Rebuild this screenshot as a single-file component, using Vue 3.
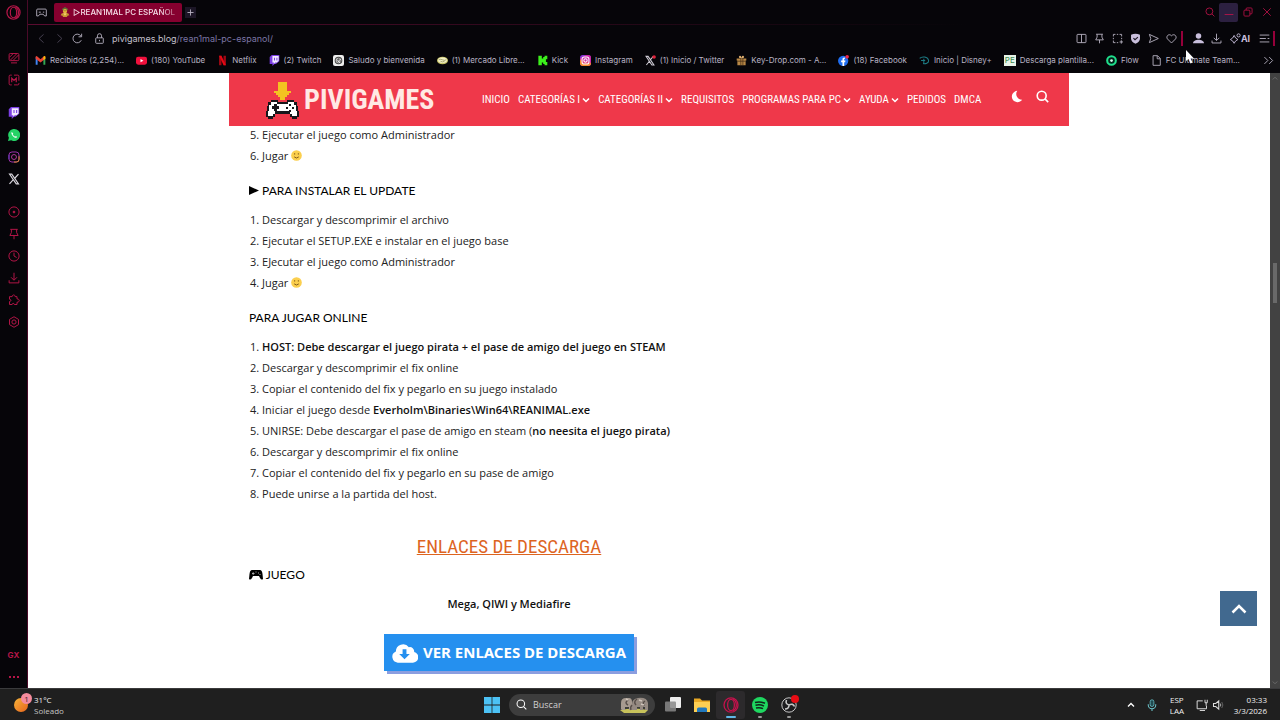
<script setup>
import { ref } from 'vue'

const search = ref('')

// svg bodies, all on a 16x16 grid
const icons = {
  opera: '<ellipse cx="8" cy="8" rx="7" ry="7.2"/><ellipse cx="8" cy="8" rx="3.4" ry="5.6"/><path d="M10 2.4c2 .8 3.300 3 3.300 5.600s-1.300 4.800-3.300 5.600"/>',
  gxcard: '<rect x="1.500" y="2" width="13" height="9.500" rx="1.500"/><path d="M2 7l5-5M3 11l9-9M7 11l7-7M4 14.500h8"/>',
  mbox: '<path d="M5 1.500H3A1.500 1.500 0 0 0 1.500 3v10A1.500 1.500 0 0 0 3 14.500h2M8 1.500h5A1.500 1.500 0 0 1 14.500 3v6M14.500 12v1a1.500 1.500 0 0 1-1.500 1.500H8"/><path d="M5 11V5.500l3 3 3-3V11" stroke-width="1.600"/>',
  player: '<circle cx="8" cy="8" r="6.800"/><circle cx="8" cy="8" r="1.200" fill="currentColor"/>',
  pin: '<path d="M3 1.800h10M4.500 2v4L2.500 10h11l-2-4V2M8 10v5"/>',
  clock: '<circle cx="8" cy="8" r="6.800"/><path d="M8 3.500V8l3.500 2"/>',
  download: '<path d="M8 1v9.500M4 7l4 4 4-4M1.500 11v3.500h13V11"/>',
  puzzle: '<path d="M2 3.500h3.500c0-3 4-3 4 0H12V6.500c4 0 4 4.500 0 4.500v3H8.500c0-2-3-2-3 0H2v-4c2.500 0 2.500-3 0-3z"/>',
  gear: '<path d="M8 1l6 3.500v7L8 15l-6-3.500v-7z"/><circle cx="8" cy="8" r="2.800"/>',
  twitch: '<path d="M4 0h11v9l-5 4H8l-3 3v-3H1V3z" fill="#7b3fe4" stroke="none"/><path d="M5 1.500h9v7l-2.500 2.500H9L7 13v-2H5z" fill="#f3ecff" stroke="none"/><path d="M8 4v4M11.500 4v4" stroke="#7b3fe4" stroke-width="1.500"/>',
  whatsapp: '<path d="M0 16l1.200-4.200A8 8 0 1 1 4.300 15z" fill="#25d366" stroke="none"/><path d="M5 4c-1.500 1.500.5 4.500 2 6s4.200 2.700 5.300.8L10.500 9.300l-1 1C8 9.600 7 8.500 6.200 7l.9-1z" fill="#fff" stroke="none"/>',
  igline: '<rect x="1.300" y="1.300" width="13.400" height="13.400" rx="4" stroke="#a033b0"/><path d="M8 14.700h3.500a3.200 3.200 0 0 0 3.200-3.200V7" stroke="#e09030"/><circle cx="8" cy="8" r="3.300" stroke="#b13a9a"/><path d="M1.300 5v6" stroke="#6a3ac8"/>',
  x: '<path d="M2 1.500h3l9 13h-3z" stroke="#d8d5dc" stroke-width="1.500"/><path d="M14 1.500L9 7M6.800 9.200L2 14.500" stroke="#d8d5dc" stroke-width="1.600"/>',
  gmail: '<path d="M1 14V3l2.800 2v9z" fill="#4285f4"/><path d="M15 14V3l-2.800 2v9z" fill="#34a853"/><path d="M1 3c0-2 1.500-1.500 2.800-.500L8 6l4.200-3.500C13.500 1.500 15 1 15 3v2.500L8 11 1 5.500z" fill="#ea4335"/><path d="M12.200 2.500C13.500 1.500 15 1 15 3v2.500l-2.800 2.200z" fill="#fbbc04"/>',
  youtube: '<rect x="0" y="2.500" width="16" height="11.500" rx="3" fill="#f0103c"/><path d="M6.500 5.700v5l4.300-2.500z" fill="#fff"/>',
  netflix: '<path d="M3 1h3.500v14H3zM9.500 1H13v14H9.500z" fill="#a00814"/><path d="M3 1h3.500L13 15H9.500z" fill="#e50914"/>',
  chatgpt: '<rect width="16" height="16" rx="3" fill="#eee"/><circle cx="8" cy="8" r="4.800" fill="none" stroke="#444" stroke-width="1.500"/><path d="M5 5.500l6 2v4M11 5l-5 1.500v5M5 8.500l4 3M8 4v4l3 2" fill="none" stroke="#555"/>',
  mercado: '<ellipse cx="8" cy="8" rx="8" ry="5.600" fill="#c8c46a"/><ellipse cx="8" cy="7.500" rx="6.500" ry="4" fill="#f4f1c8"/><path d="M2.500 7q3-1.500 5.500 0t5.500 0M5 9q3 2 6 0" fill="none" stroke="#8c8a50"/>',
  kick: '<path d="M2 1h5v4h2V3h2V1h4v5h-2v4h2v5h-4v-2H9v-2H7v4H2z" fill="#3cf01c"/>',
  instagram: '<rect width="16" height="16" rx="4" fill="#8b35d6"/><path d="M0 6l16 5v1a4 4 0 0 1-4 4H4a4 4 0 0 1-4-4z" fill="#f98b2c"/><path d="M0 5l9-5h3a4 4 0 0 1 4 4v8L4 13z" fill="#e0249a" opacity=".75"/><rect x="3" y="3" width="10" height="10" rx="3" fill="none" stroke="#fff" stroke-width="1.500"/><circle cx="8" cy="8" r="2.400" fill="none" stroke="#fff" stroke-width="1.500"/>',
  xbadge: '<path d="M1.500 2h3l8.500 12.500h-3zM12 2L8 6.800M6 9.500L2 14.500" fill="none" stroke="#d0cdd6" stroke-width="1.500"/><circle cx="13.200" cy="2.800" r="2.600" fill="#e0243c"/>',
  keydrop: '<path d="M1 5h14v3h-1v7H2V8H1z" fill="#b88846"/><path d="M8 5C5 5 3 3 5 1.500S8 3 8 5zm0 0c3 0 5-2 3-3.500S8 3 8 5z" fill="#e0b070"/><path d="M2 9h12M7 5v10M10 5v10" stroke="#3a2512"/>',
  facebook: '<circle cx="7.500" cy="8.500" r="7.500" fill="#1f6df0"/><path d="M6.500 16v-5.500h-2V8h2V6.500c0-2 1-3 3.500-2.700v2C8.800 5.700 9 6 9 8h1.800l-.4 2.500H9V16z" fill="#fff"/><circle cx="13.300" cy="2.700" r="2.600" fill="#f02849"/>',
  disney: '<path d="M1 5c3-3.500 12-3 13 3 .5 4-5 5.500-8 4.500M3 8h6M7 5.500v8" fill="none" stroke="#1d7b84" stroke-width="1.500"/>',
  flow: '<circle cx="8" cy="8" r="6.300" fill="#03231b" stroke="#1fe08c" stroke-width="3"/><circle cx="8" cy="8" r="2" fill="#d8fff0"/>',
  file: '<path d="M3 1h6.500L13.500 5v10H3zM9 1v4.500h4.500" fill="none" stroke="#aaa6b4" stroke-width="1.400"/>',
  split: '<rect x="1.500" y="2" width="13" height="12" rx="1"/><path d="M8 2v12"/>',
  capture: '<path d="M2 5V2h3M7 2h2M11 2h3v3M14 7v2M2 7v2M2 11v3h3M7 14h2M11 13h5M13.500 10.500v5"/>',
  shield: '<path d="M1.500 2.500Q8-.5 14.500 2.500V8q0 5-6.500 7.500Q1.500 13 1.500 8z" fill="#c9bfdc" stroke="none"/><path d="M5 7.500l2.300 2.300L11.500 6" stroke="#17121f" stroke-width="1.600"/>',
  send: '<path d="M2 2l13 6-13 6 2-6z"/>',
  heart: '<path d="M8 14.500L2 8.500C-.5 5 4 0 8 4c4-4 8.500 1 6 4.500z"/>',
  user: '<circle cx="8" cy="4.500" r="4" fill="#c9bfdc" stroke="none"/><path d="M0 15c0-7 16-7 16 0z" fill="#c9bfdc" stroke="none"/>',
  menu: '<path d="M1 3h14M1 8h9M12.500 8H15M1 13h14"/>',
  spark: '<path d="M6 3.500Q7.500 8 11.500 9.500 7.500 11 6 15 4.500 11 .5 9.500 4.500 8 6 3.500z"/><circle cx="12.500" cy="3.500" r="2.300"/>',
  magnifier: '<circle cx="7" cy="7" r="5.500"/><path d="M11 11l4 4"/>',
  restore: '<rect x="1.500" y="5" width="9.500" height="9.500" rx="1.500"/><path d="M5 5V3a1.500 1.500 0 0 1 1.500-1.500H13A1.500 1.500 0 0 1 14.500 3v6.500A1.500 1.500 0 0 1 13 11h-2"/>',
  close: '<path d="M2 2l12 12M14 2L2 14"/>',
  minimize: '<path d="M1 12h14"/>',
  gamepad: '<path d="M2.500 3h11A1.500 1.500 0 0 1 15 4.500v8.500h-2.500l-2-2.500h-5l-2 2.500H1V4.500A1.500 1.500 0 0 1 2.500 3zM4 7.500h3M10 7.500h2"/>',
  lock: '<rect x="2.500" y="7" width="11" height="8" rx="1"/><path d="M5 7V4a3 3 0 0 1 6 0v3M8 10v2"/>',
  back: '<path d="M11 2L4.500 8l6.500 6"/>',
  forward: '<path d="M5 2l6.500 6L5 14"/>',
  reload: '<path d="M13.500 10.500a6.300 6.300 0 1 1-.5-6M14 1v4.500H9.500"/>',
  plus: '<path d="M8 1v14M1 8h14"/>',
  more: '<path d="M2 3l5 5-5 5M9 3l5 5-5 5"/>',
}

const sideGroups = [
  [{ icon: 'gxcard', name: 'GX Control' }, { icon: 'mbox', name: 'Mods' }],
  [
    { icon: 'twitch', name: 'Twitch' },
    { icon: 'whatsapp', name: 'WhatsApp' },
    { icon: 'igline', name: 'Instagram' },
    { icon: 'x', name: 'X' },
  ],
  [
    { icon: 'player', name: 'Player' },
    { icon: 'pin', name: 'Pinboards' },
    { icon: 'clock', name: 'Historial' },
    { icon: 'download', name: 'Descargas' },
    { icon: 'puzzle', name: 'Extensiones' },
    { icon: 'gear', name: 'Configuración' },
  ],
]

const pageTools = [
  { icon: 'split', name: 'Pantalla dividida' },
  { icon: 'pin', name: 'Fijar' },
  { icon: 'capture', name: 'Captura' },
  { icon: 'shield', name: 'Bloqueador' },
  { icon: 'send', name: 'Enviar' },
  { icon: 'heart', name: 'Favorito' },
]

const bookmarks = [
  { icon: 'gmail', text: 'Recibidos (2,254)...' },
  { icon: 'youtube', text: '(180) YouTube' },
  { icon: 'netflix', text: 'Netflix' },
  { icon: 'twitch', text: '(2) Twitch' },
  { icon: 'chatgpt', text: 'Saludo y bienvenida' },
  { icon: 'mercado', text: '(1) Mercado Libre...' },
  { icon: 'kick', text: 'Kick' },
  { icon: 'instagram', text: 'Instagram' },
  { icon: 'xbadge', text: '(1) Inicio / Twitter' },
  { icon: 'keydrop', text: 'Key-Drop.com - A...' },
  { icon: 'facebook', text: '(18) Facebook' },
  { icon: 'disney', text: 'Inicio | Disney+' },
  { icon: 'pe', text: 'Descarga plantilla...' },
  { icon: 'flow', text: 'Flow' },
  { icon: 'file', text: 'FC Ultimate Team...' },
]

const nav = [
  { text: 'INICIO' },
  { text: 'CATEGORÍAS I', sub: true },
  { text: 'CATEGORÍAS II', sub: true },
  { text: 'REQUISITOS' },
  { text: 'PROGRAMAS PARA PC', sub: true },
  { text: 'AYUDA', sub: true },
  { text: 'PEDIDOS' },
  { text: 'DMCA' },
]
</script>

<template>
  <div class="desktop">
    <div class="browser">
      <aside class="sidebar">
        <button class="side-btn logo" aria-label="Opera GX">
          <svg class="line" viewBox="0 0 16 16" v-html="icons.opera" />
        </button>
        <div v-for="(group, i) in sideGroups" :key="i" class="side-group">
          <button v-for="item in group" :key="item.name" class="side-btn" :aria-label="item.name">
            <svg class="line" viewBox="0 0 16 16" v-html="icons[item.icon]" />
          </button>
        </div>
        <div class="side-group bottom">
          <button class="side-btn gx">GX</button>
          <button class="side-btn dots" aria-label="Más"><i /><i /><i /></button>
        </div>
      </aside>

      <div class="window">
        <div class="tabs">
          <button class="tool corner" aria-label="GX Corner">
            <svg class="line" viewBox="0 0 16 16" v-html="icons.gamepad" />
          </button>
          <button class="tab">
            <svg class="tab-icon" viewBox="0 0 16 16">
              <path d="M8 0l5 3-1 2H4L3 3z" fill="#5d6b35" />
              <circle cx="8" cy="6.500" r="3.500" fill="#e8b93c" />
              <path d="M3 10h10l2 3-3 1-1 2H5l-1-2-3-1z" fill="#c89632" />
              <path d="M6 6h1M9 6h1" stroke="#30240c" stroke-width="1.500" />
              <path d="M5 10l3 4 3-4z" fill="#f4d36a" />
            </svg>
            <span>▷REAN1MAL PC ESPAÑOL</span>
          </button>
          <button class="new-tab" aria-label="Nueva pestaña">
            <svg class="line" viewBox="0 0 16 16" v-html="icons.plus" />
          </button>
          <div class="controls">
            <button aria-label="Buscar pestañas"><svg class="line" viewBox="0 0 16 16" v-html="icons.magnifier" /></button>
            <button class="hover" aria-label="Minimizar"><svg class="line" viewBox="0 0 16 16" v-html="icons.minimize" /></button>
            <button aria-label="Restaurar"><svg class="line" viewBox="0 0 16 16" v-html="icons.restore" /></button>
            <button aria-label="Cerrar"><svg class="line" viewBox="0 0 16 16" v-html="icons.close" /></button>
          </div>
        </div>

        <div class="toolbar">
          <button class="tool dim" aria-label="Atrás"><svg class="line" viewBox="0 0 16 16" v-html="icons.back" /></button>
          <button class="tool dim" aria-label="Adelante"><svg class="line" viewBox="0 0 16 16" v-html="icons.forward" /></button>
          <button class="tool" aria-label="Recargar"><svg class="line" viewBox="0 0 16 16" v-html="icons.reload" /></button>
          <button class="tool lock" aria-label="Seguridad"><svg class="line" viewBox="0 0 16 16" v-html="icons.lock" /></button>
          <a class="address" href="#">pivigames.blog<span>/rean1mal-pc-espanol/</span></a>
          <button v-for="t in pageTools" :key="t.name" class="tool" :aria-label="t.name">
            <svg class="line" viewBox="0 0 16 16" v-html="icons[t.icon]" />
          </button>
          <i class="bar first" />
          <button class="tool" aria-label="Perfil"><svg class="line" viewBox="0 0 16 16" v-html="icons.user" /></button>
          <button class="tool" aria-label="Descargas"><svg class="line" viewBox="0 0 16 16" v-html="icons.download" /></button>
          <button class="tool ai"><svg class="line" viewBox="0 0 16 16" v-html="icons.spark" />AI</button>
          <button class="tool" aria-label="Menú"><svg class="line" viewBox="0 0 16 16" v-html="icons.menu" /></button>
          <i class="bar" />
        </div>

        <div class="bookmarks">
          <a v-for="b in bookmarks" :key="b.text" href="#">
            <span v-if="b.icon === 'pe'" class="pe">PE</span>
            <svg v-else viewBox="0 0 16 16" v-html="icons[b.icon]" />
            {{ b.text }}
          </a>
          <button class="tool overflow" aria-label="Más marcadores">
            <svg class="line" viewBox="0 0 16 16" v-html="icons.more" />
          </button>
        </div>

        <div class="viewport">
          <div class="page">
            <header class="site-header">
              <a class="brand" href="#">
                <svg viewBox="0 0 33 38">
                  <path d="M12 1h9v9h4v2h-2v2h-2v2h-2v3h-5v-3h-2v-2h-2v-2H8v-2h4z" fill="#f3c321" />
                  <path d="M5 19h7v2h9v-2h7v2h3v4h1v5h1v6h-2v2h-5v-2h-2v-3H9v3H7v2H2v-2H0v-6h1v-5h1v-4h3z" fill="#17171b" />
                  <path d="M5 21h6v2h11v-2h6v3h2v6h1v5h-5v-2h-2v-3H9v3H7v2H2v-5h1v-6h2z" fill="#fff" />
                  <path d="M8 23h3v2h2v3h-2v2H8v-2H6v-3h2zM23 23h2v2h-2zM20 26h2v2h-2zM26 26h2v2h-2zM23 29h2v2h-2z" fill="#17171b" />
                </svg>
                PIVIGAMES
              </a>
              <nav>
                <a v-for="n in nav" :key="n.text" href="#">
                  {{ n.text }}
                  <svg v-if="n.sub" viewBox="0 0 8 8"><path d="M1 2.500l3 3 3-3" fill="none" stroke="currentColor" stroke-width="1.500" /></svg>
                </a>
              </nav>
              <div class="actions">
                <button aria-label="Modo oscuro">
                  <svg viewBox="0 0 16 16"><path d="M9 1a7 7 0 1 0 6 11A7 7 0 0 1 9 1z" fill="currentColor" /></svg>
                </button>
                <button aria-label="Buscar">
                  <svg class="find" viewBox="0 0 16 16" v-html="icons.magnifier" />
                </button>
              </div>
            </header>

            <article>
              <ol class="cut" start="5">
                <li>Ejecutar el juego como Administrador</li>
                <li>
                  Jugar
                  <svg class="smile" viewBox="0 0 12 12"><circle cx="6" cy="6" r="5.800" fill="#fbcf4e" /><path d="M4 3.500v1.500M8 3.500v1.500M3.500 7.500q2.500 2.500 5 0" fill="none" stroke="#7a5218" /></svg>
                </li>
              </ol>

              <h3>
                <svg class="play" viewBox="0 0 10 10"><path d="M0 1l10 4.500L0 10z" fill="currentColor" /></svg>
                PARA INSTALAR EL UPDATE
              </h3>
              <ol>
                <li>Descargar y descomprimir el archivo</li>
                <li>Ejecutar el SETUP.EXE e instalar en el juego base</li>
                <li>EJecutar el juego como Administrador</li>
                <li>
                  Jugar
                  <svg class="smile" viewBox="0 0 12 12"><circle cx="6" cy="6" r="5.800" fill="#fbcf4e" /><path d="M4 3.500v1.500M8 3.500v1.500M3.500 7.500q2.500 2.500 5 0" fill="none" stroke="#7a5218" /></svg>
                </li>
              </ol>

              <h3>PARA JUGAR ONLINE</h3>
              <ol>
                <li><strong>HOST: Debe descargar el juego pirata + el pase de amigo del juego en STEAM</strong></li>
                <li>Descargar y descomprimir el fix online</li>
                <li>Copiar el contenido del fix y pegarlo en su juego instalado</li>
                <li>Iniciar el juego desde <strong>Everholm\Binaries\Win64\REANIMAL.exe</strong></li>
                <li>UNIRSE: Debe descargar el pase de amigo en steam (<strong>no neesita el juego pirata)</strong></li>
                <li>Descargar y descomprimir el fix online</li>
                <li>Copiar el contenido del fix y pegarlo en su pase de amigo</li>
                <li>Puede unirse a la partida del host.</li>
              </ol>

              <h2>ENLACES DE DESCARGA</h2>
              <h3 class="game">
                <svg class="pad" viewBox="0 0 14 11">
                  <path d="M3 1h8q2 0 2.500 4l.5 5q-1.500 1.500-3-1L10 7H4L3 9q-1.500 2.500-3 1l.5-5Q1 1 3 1z" fill="currentColor" />
                  <path d="M3 4.500h2.500M4.200 3.300v2.500M9 4h1M10.500 5.500h1M6.500 3h1" stroke="#aaa" />
                </svg>
                JUEGO
              </h3>
              <p>Mega, QIWI y Mediafire</p>
              <a class="download" href="#">
                <svg viewBox="0 0 27 20">
                  <path d="M6 20a6 6 0 0 1-2-11.500A7.500 7.500 0 0 1 17.500 4a4.500 4.500 0 0 1 5.500 5 5.600 5.600 0 0 1-2 11z" fill="#fff" />
                  <path d="M11 6h4v5h3.500L13 16.500 7.500 11H11z" fill="#2590ef" />
                </svg>
                VER ENLACES DE DESCARGA
              </a>
            </article>
          </div>
          <button class="to-top" aria-label="Volver arriba">
            <svg viewBox="0 0 16 10"><path d="M1.500 8.500L8 2l6.500 6.500" fill="none" stroke="#fff" stroke-width="2.500" /></svg>
          </button>
          <div class="scrollbar">
            <svg viewBox="0 0 8 6"><path d="M1 5l3-3 3 3" fill="none" stroke="#777" /></svg>
            <i />
            <svg class="down" viewBox="0 0 8 6"><path d="M1 1l3 3 3-3" fill="none" stroke="#777" /></svg>
          </div>
        </div>
      </div>
    </div>

    <footer class="taskbar">
      <div class="weather">
        <span class="sun"><b>1</b></span>
        <div>31°C<br><span class="muted">Soleado</span></div>
      </div>

      <div class="apps">
        <button class="app" aria-label="Inicio">
          <svg viewBox="0 0 16 16"><path d="M0 0h7.600v7.600H0zM8.400 0H16v7.600H8.400zM0 8.400h7.600V16H0zM8.400 8.400H16V16H8.400z" fill="#4cc2f5" /></svg>
        </button>
        <label class="search">
          <svg viewBox="0 0 16 16" v-html="icons.magnifier" />
          <input v-model="search" type="text" placeholder="Buscar" aria-label="Buscar">
          <svg class="elephants" viewBox="0 0 30 17">
            <path d="M0 14q14-3 28 0l-3 3H4z" fill="#c7c25b" />
            <path d="M1 13V7q0-5 5-5h3q3 0 3 4v8H9v-3H5v3H2z" fill="#a69a90" />
            <path d="M12 14V8q0-5 6-6 9-1 10 5v7h-3v-3h-2v3h-3v-3h-3v3z" fill="#958a82" />
            <path d="M8 4q-4 3 0 5M17 3q-4 3-1 6M25 5q-3 2-1 5M12 9q-2 2-1 5" fill="none" stroke="#584f4a" />
            <path d="M6 3l2 1M19 4l3 1M21 8l3 1" stroke="#d0c5bc" />
          </svg>
        </label>
        <button class="app" aria-label="Vista de tareas">
          <svg viewBox="0 0 16 16"><rect x="5" y="0" width="11" height="11" rx="1" fill="#eee" /><rect x="0" y="4.500" width="11" height="10" rx="1" fill="#888" opacity=".85" /></svg>
        </button>
        <button class="app" aria-label="Explorador">
          <svg viewBox="0 0 16 16"><path d="M0 1.500h6l2 2h8V15H0z" fill="#e9a925" /><path d="M0 5h16v10H0z" fill="#fdcf53" /><path d="M3 15v-3q0-1.500 1.500-1.500h7Q13 10.500 13 12v3z" fill="#2279bd" /></svg>
        </button>
        <button class="app active" aria-label="Opera GX">
          <svg class="line" viewBox="0 0 16 16" v-html="icons.opera" />
        </button>
        <button class="app open" aria-label="Spotify">
          <svg viewBox="0 0 16 16"><circle cx="8" cy="8" r="8" fill="#1ed760" /><path d="M3 5.500q5-1.500 10 .8M3.500 8.300q4.500-1.200 8.500.8M4 11q4-1 7 .7" fill="none" stroke="#10251a" stroke-width="1.500" /></svg>
        </button>
        <button class="app open" aria-label="OBS Studio">
          <svg viewBox="0 0 16 16"><circle cx="8" cy="8" r="7.200" fill="#1d1d1f" stroke="#c7c7c7" /><path d="M8 8q-4-1-2.500-5M8 8q4-2 5.500 1.500M8 8q0 4-4 4" fill="none" stroke="#c7c7c7" stroke-width="1.600" /></svg>
          <i class="rec" />
        </button>
      </div>

      <div class="tray">
        <svg viewBox="0 0 16 16"><path d="M4 10l4-4 4 4" fill="none" stroke="#fff" stroke-width="1.800" /></svg>
        <svg viewBox="0 0 16 16"><rect x="5.500" y="1" width="5" height="9" rx="2.500" fill="#204a50" stroke="#6cc5cc" /><path d="M3 7v1a5 5 0 0 0 10 0V7M8 13v3" fill="none" stroke="#6cc5cc" stroke-width="1.400" /></svg>
        <div class="lang">ESP<br>LAA</div>
        <svg viewBox="0 0 16 16"><path d="M9 2.500H1.500V13H14V9M5 15.300h7M12 1v4h3V1M13.500 5v4" fill="none" stroke="#ddd" stroke-width="1.300" /></svg>
        <svg viewBox="0 0 16 16"><path d="M2 6h3l4-3.500v11L5 10H2z" fill="none" stroke="#ddd" stroke-width="1.400" /><path d="M11 6q1.500 2 0 4" fill="none" stroke="#ddd" /><path d="M13 4q3 4 0 8" fill="none" stroke="#777" /></svg>
        <div class="time">03:33<br>3/3/2026</div>
      </div>
    </footer>

    <svg class="cursor" viewBox="0 0 9 14"><path d="M1 0v11l2.500-2 2 4.500 2-1-2-4H9z" fill="#fff" /></svg>
  </div>
</template>

<style>
body {
  margin: 0;
  background: #fff;
}
</style>

<style scoped>
.desktop {
  position: relative;
  display: flex;
  flex-direction: column;
  min-height: 100vh;
  font-family: Inter, sans-serif;
  color: #b9b4c4;
}

button {
  padding: 0;
  border: 0;
  background: none;
  color: inherit;
  font: inherit;
}

a {
  color: inherit;
  text-decoration: none;
}

svg { flex: none; }

.line {
  display: block;
  width: 12px;
  height: 12px;
  fill: none;
  stroke: currentColor;
  stroke-width: 1.3;
}

.browser {
  flex: 1;
  display: flex;
  background: #060509;
}

/* sidebar */
.sidebar {
  display: flex;
  flex-direction: column;
  gap: 11px;
  width: 27px;
  border-right: 1px solid #4a0a28;
  color: #b51648;
}

.side-group {
  display: flex;
  flex-direction: column;
}

.side-group.bottom { margin-top: auto; }

.side-btn {
  display: flex;
  align-items: center;
  justify-content: center;
  height: 22px;
}

.side-btn.logo {
  height: 25px;
  margin-bottom: 11px;
}

.side-btn.logo .line {
  width: 15px;
  height: 15px;
}

.gx {
  font-size: 8px;
  font-weight: 700;
}

.dots { gap: 2px; }

.dots i {
  width: 2px;
  height: 2px;
  background: #b51648;
}

/* window */
.window {
  flex: 1;
  min-width: 0;
  display: flex;
  flex-direction: column;
}

.tabs {
  display: flex;
  align-items: center;
  height: 24px;
  padding: 0 4px 0 7px;
  border-bottom: 1px solid;
  border-image: linear-gradient(90deg, #5a0c30, #060509 75%) 1;
}

.tool {
  display: flex;
  align-items: center;
  justify-content: center;
  width: 18px;
  height: 18px;
}

.tool .line {
  width: 11px;
  height: 11px;
}

.corner {
  width: 12px;
  margin-right: 7px;
}

.tab {
  display: flex;
  align-items: center;
  gap: 3px;
  width: 128px;
  height: 19px;
  padding: 0 4px 0 6px;
  border-radius: 2px;
  background: #86002f;
  color: #f6dfe8;
  font-size: 8px;
  font-weight: 500;
}

.tab span {
  white-space: nowrap;
  mask-image: linear-gradient(90deg, #000 85%, #0006);
}

.tab-icon {
  width: 10px;
  height: 10px;
}

.new-tab {
  display: flex;
  align-items: center;
  justify-content: center;
  width: 11px;
  height: 11px;
  margin-left: 3px;
  background: #1c1626;
}

.new-tab .line {
  width: 7px;
  height: 7px;
  stroke-width: 2;
}

.controls {
  display: flex;
  margin-left: auto;
  color: #c0124a;
}

.controls button {
  display: flex;
  align-items: center;
  justify-content: center;
  width: 19px;
  height: 19px;
}

.controls .line {
  width: 10px;
  height: 10px;
}

.controls .hover {
  border-radius: 2px;
  background: #2c2040;
}

.toolbar {
  display: flex;
  align-items: center;
  height: 26px;
  padding: 0 5px 0 4px;
}

.dim { color: #4c4656; }

.lock { margin: 0 4px; }

.address {
  flex: 1;
  color: #c4c0cc;
  font-size: 9px;
}

.address span { color: #7c76a6; }

.bar {
  width: 2px;
  height: 15px;
  background: #96003a;
}

.bar.first { margin: 0 6px 0 1px; }

.ai {
  width: 30px;
  color: #c9bfdc;
  font-size: 9px;
  font-weight: 700;
}

.bookmarks {
  display: flex;
  align-items: center;
  gap: 12px;
  height: 18px;
  padding: 0 5px 4px 7px;
  font-size: 8px;
}

.bookmarks a {
  display: flex;
  align-items: center;
  gap: 4px;
  white-space: nowrap;
}

.bookmarks a svg {
  width: 11px;
  height: 11px;
}

.pe {
  padding: 0 1px;
  background: #e8f4e8;
  color: #3a8a50;
  font-size: 8px;
  line-height: 11px;
}

.overflow {
  width: 14px;
  margin-left: auto;
}

/* page */
.viewport {
  position: relative;
  flex: 1;
  display: flex;
  background: #fff;
}

.page {
  flex: 1;
  min-width: 0;
}

.site-header {
  position: relative;
  z-index: 1;
  box-sizing: border-box;
  display: flex;
  align-items: center;
  max-width: 840px;
  height: 53px;
  margin: 0 auto;
  padding: 0 20px 0 37px;
  background: #ef384a;
  color: #fff;
}

.brand {
  flex: none;
  display: flex;
  align-items: center;
  gap: 5px;
  width: 216px;
  color: #ffe9e4;
  font: 700 28px/38px "Roboto Condensed", Roboto, sans-serif;
}

.brand svg {
  width: 33px;
  height: 38px;
}

nav {
  flex: 1;
  display: flex;
  gap: 8px;
  font: 11px/16px "Roboto Condensed", Roboto, sans-serif;
}

nav a {
  display: flex;
  align-items: center;
  gap: 2px;
  white-space: nowrap;
}

nav svg {
  width: 8px;
  height: 8px;
}

.actions {
  display: flex;
  gap: 13px;
  padding-bottom: 6px;
}

.actions button { display: flex; }

.actions svg {
  width: 13px;
  height: 13px;
}

.find {
  fill: none;
  stroke: #fff;
  stroke-width: 2;
}

article {
  display: flex;
  flex-direction: column;
  box-sizing: border-box;
  max-width: 840px;
  margin: 0 auto;
  padding: 0 300px 17px 20px;
  color: #222;
  font: 11px/21px "Open Sans", sans-serif;
}

ol {
  margin: 0;
  padding: 0 0 0 1px;
  list-style-position: inside;
}

.cut { margin-top: -2px; }

strong {
  color: #111;
  font-weight: 600;
}

.smile {
  width: 11px;
  height: 11px;
  vertical-align: -1px;
}

h3 {
  margin: 14px 0 8px;
  color: #000;
  font: 12px/21px Lato, sans-serif;
}

.play {
  width: 10px;
  height: 10px;
}

h2 {
  align-self: center;
  margin: 28px 0 2px;
  color: #dd641f;
  font: 19px/30px "Roboto Condensed", Roboto, sans-serif;
  text-decoration: underline;
}

.game { margin-top: 0; }

.pad {
  width: 14px;
  height: 11px;
  vertical-align: -1px;
}

p {
  margin: 0;
  color: #111;
  font-weight: 600;
  text-align: center;
}

.download {
  display: flex;
  align-items: center;
  align-self: center;
  gap: 5px;
  height: 37px;
  margin-top: 20px;
  padding: 0 8px;
  background: #2590ef;
  box-shadow: 3px 3px #8b9ee0;
  color: #fff;
  font: 700 15px/21px "Noto Sans", sans-serif;
  white-space: nowrap;
}

.download svg {
  width: 26px;
  height: 20px;
}

.to-top {
  position: absolute;
  right: 23px;
  bottom: 62px;
  display: flex;
  align-items: center;
  justify-content: center;
  width: 37px;
  height: 35px;
  background: #41698f;
}

.to-top svg {
  width: 16px;
  height: 10px;
}

.scrollbar {
  display: flex;
  flex-direction: column;
  align-items: center;
  width: 10px;
  background: #424242;
}

.scrollbar svg {
  width: 6px;
  height: 6px;
  margin: 2px 0;
}

.scrollbar i {
  width: 4px;
  height: 40px;
  margin-top: 180px;
  background: #696969;
}

.scrollbar .down { margin-top: auto; }

/* taskbar */
.taskbar {
  display: grid;
  grid-template-columns: 1fr auto 1fr;
  align-items: center;
  box-sizing: border-box;
  height: 32px;
  border-top: 1px solid #3a3a3c;
  background: #1f1f1f;
  color: #f0f0f0;
  font: 8px/11px "Open Sans", sans-serif;
}

.weather {
  display: flex;
  align-items: center;
  gap: 6px;
  padding-left: 14px;
}

.muted { color: #c4c4c4; }

.sun {
  position: relative;
  width: 14px;
  height: 14px;
  border-radius: 50%;
  background: linear-gradient(135deg, #f6b43a, #e8641c);
}

.sun b {
  position: absolute;
  top: -5px;
  right: -4px;
  width: 11px;
  border-radius: 50%;
  background: #f58b9c;
  color: #40202a;
  font-weight: 400;
  text-align: center;
}

.apps {
  display: flex;
  align-items: center;
}

.app {
  position: relative;
  display: flex;
  align-items: center;
  justify-content: center;
  width: 29px;
  height: 28px;
}

.app svg {
  width: 16px;
  height: 16px;
}

.app.active {
  border-radius: 3px;
  background: #2c2a2c;
  color: #c4124c;
}

.app.open::after,
.app.active::after {
  content: '';
  position: absolute;
  bottom: 1px;
  width: 4px;
  height: 2px;
  border-radius: 1px;
  background: #999;
}

.app.active::after {
  width: 10px;
  background: #60b8e8;
}

.rec {
  position: absolute;
  top: 4px;
  right: 4px;
  width: 8px;
  height: 8px;
  border-radius: 50%;
  background: #e80c14;
}

.search {
  display: flex;
  align-items: center;
  gap: 6px;
  box-sizing: border-box;
  width: 146px;
  height: 22px;
  margin: 0 3px;
  padding: 0 5px 0 7px;
  border-radius: 11px;
  background: #3d3d3d;
}

.search svg {
  width: 11px;
  height: 11px;
  fill: none;
  stroke: #fff;
  stroke-width: 1.5;
}

.search svg.elephants {
  width: 30px;
  height: 17px;
  stroke: none;
}

.search input {
  flex: 1;
  min-width: 0;
  padding: 0;
  border: 0;
  outline: 0;
  background: none;
  color: #fff;
  font: 9px/12px "Open Sans", sans-serif;
}

.search input::placeholder {
  color: #d0d0d0;
  opacity: 1;
}

.tray {
  display: flex;
  align-items: center;
  justify-content: flex-end;
  padding-right: 13px;
}

.tray svg {
  width: 12px;
  height: 12px;
  margin-right: 4px;
}

.tray svg:first-child { margin-right: 9px; }

.lang {
  margin: 0 12px 0 8px;
  text-align: center;
}

.time {
  width: 39px;
  text-align: right;
}

.cursor {
  position: absolute;
  top: 50px;
  right: 86px;
  width: 9px;
  height: 14px;
}
</style>
